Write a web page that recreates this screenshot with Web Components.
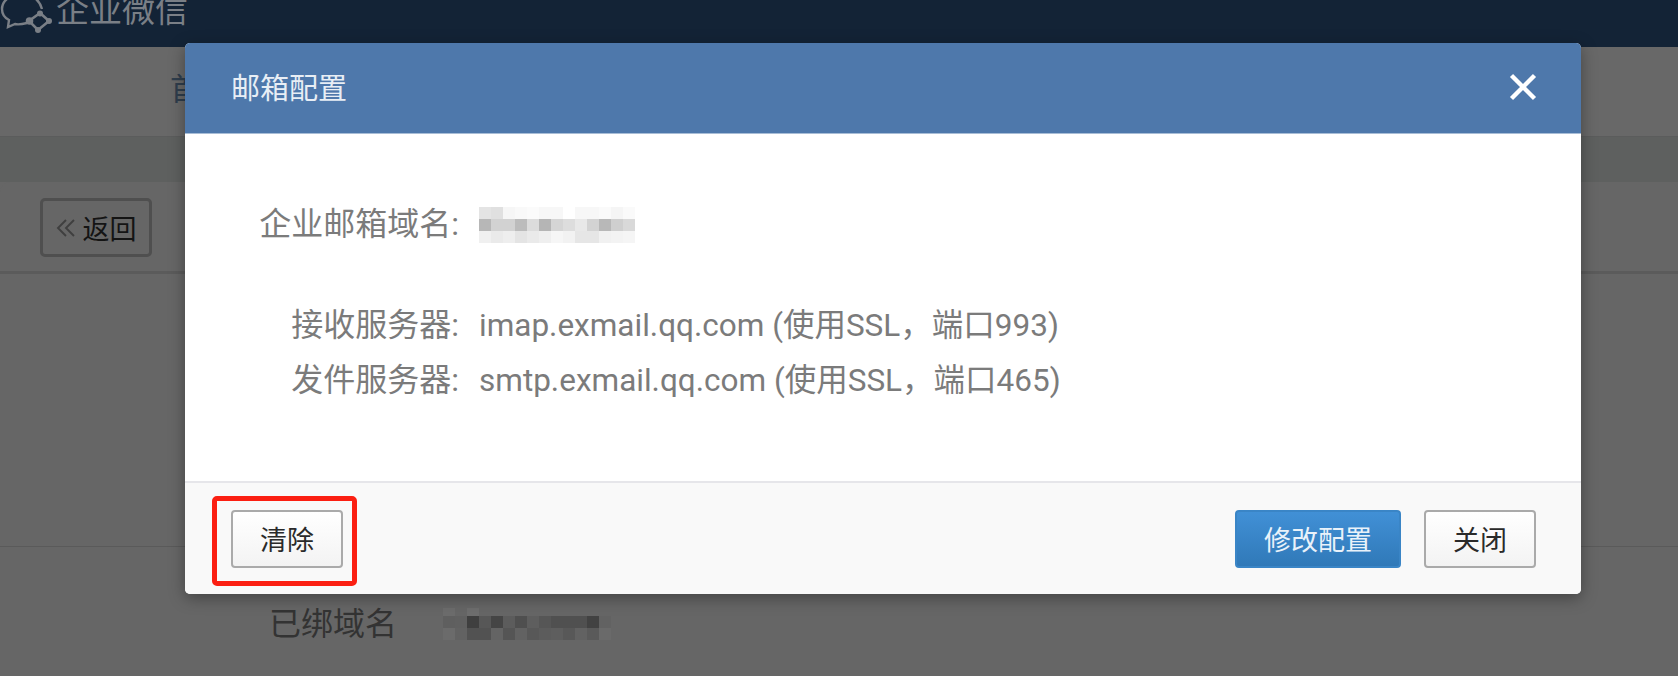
<!DOCTYPE html>
<html>
<head>
<meta charset="utf-8">
<style>
    html, body { margin: 0; height: 100%; overflow: hidden; background: #666; }
    body { font-family: Roboto, "Noto Sans CJK SC", sans-serif; }
</style>
</head>
<body>
<wx-admin-page>
    <wx-dialog heading="邮箱配置">
        <wx-config-row label="企业邮箱域名:" class="domain">
            <wx-mosaic cell="12" rows="e4e4e4 e0e0e0 f6f6f6 f9f9f9 fbfbfb f7f7f7 f7f7f7 ffffff f7f7f7 f7f7f7 fafafa f5f5f5 fafafa,b7b7b7 d2d2d2 d2d2d2 bcbcbc dcdcdc b5b5b5 d5d5d5 dddddd e8e8e8 d3d3d3 b8b8b8 cfcfcf d9d9d9,f0f0f0 eaeaea eeeeee e4e4e4 eaeaea efefef f6f6f6 f2f2f2 e6e6e6 e6e6e6 f1f1f1 f3f3f3 f5f5f5"></wx-mosaic>
        </wx-config-row>
        <wx-config-row label="接收服务器:" class="imap">imap.exmail.qq.com (使用SSL，端口993)</wx-config-row>
        <wx-config-row label="发件服务器:" class="smtp">smtp.exmail.qq.com (使用SSL，端口465)</wx-config-row>
        <wx-button slot="footer-left" marked>清除</wx-button>
        <wx-button slot="footer-right" primary>修改配置</wx-button>
        <wx-button slot="footer-right">关闭</wx-button>
    </wx-dialog>
</wx-admin-page>

<script>
// header, nav and the dimmed page behind the dialog
class WxAdminPage extends HTMLElement {
    constructor() {
        super();
        this.attachShadow({ mode: 'open' });
        this.shadowRoot.innerHTML = `
        <style>
            :host { display: block; position: relative; height: 676px; overflow: hidden; background: #666; color: #3a3a3a; }
            #top { height: 47px; background: #132336; display: flex; align-items: flex-start; overflow: hidden; }
            #logo { flex: none; width: 52px; height: 34px; }
            #brand { font-size: 33px; line-height: 40px; color: #7a7f86; margin: -9px 0 0 4px; }
            #nav { height: 90px; background: #686868; border-bottom: 1px solid #5b5c5c; box-sizing: border-box; padding: 21px 0 0 170px; font-size: 31px; line-height: 44px; color: #2f3d4c; }
            #band { height: 45px; background: #5e605f; }
            #bar { height: 92px; background: #666; border-radius: 10px 10px 0 0; border-bottom: 3px solid #5b5b5b; box-sizing: border-box; padding: 16px 0 0 40px; }
            #back { width: 112px; height: 59px; box-sizing: border-box; border: 3px solid #4f4f4f; border-radius: 5px; display: flex; align-items: center; justify-content: center; gap: 7px; font-size: 27px; color: #141414; }
            #back svg { width: 20px; height: 20px; }
            #rest { height: 272px; }
            #line { height: 1px; background: #5a5a5a; }
            #bound { display: flex; align-items: center; gap: 46px; padding: 55px 0 0 269px; }
            #bound span { font-size: 32px; line-height: 44px; color: #333; }
        </style>
        <div id="top">
            <svg id="logo" viewBox="0 0 52 34" fill="none" stroke="#7a7f86" stroke-width="2.4">
                <path d="M42 9 C40 1 33 -6 22 -6 C10 -6 2 1 2 9 C2 14 5 18 9 20 L8 27 L15 24 C19 25 23 24 27 23"/>
                <path d="M40 13 L29 21 L38 30 L49 21 Z" stroke-width="2.6"/>
                <circle cx="29.500" cy="21" r="3.800" fill="#7a7f86" stroke="none"/>
                <circle cx="40" cy="13.500" r="3" fill="#7a7f86" stroke="none"/>
                <circle cx="49" cy="21" r="3" fill="#7a7f86" stroke="none"/>
                <circle cx="38" cy="30" r="3" fill="#7a7f86" stroke="none"/>
            </svg>
            <span id="brand">企业微信</span>
        </div>
        <div id="nav">首页</div>
        <div id="band"></div>
        <div id="bar">
            <div id="back">
                <svg viewBox="0 0 20 20" fill="none" stroke="#3f3f3f" stroke-width="1.900"><path d="M10 2 L2 10 L10 18 M18 2 L10 10 L18 18"/></svg>
                <span>返回</span>
            </div>
        </div>
        <div id="rest"></div>
        <div id="line"></div>
        <div id="bound">
            <span>已绑域名</span>
            <wx-mosaic cell="12" first-row="8" rows="6c6c6c 666666 6e6e6e 666666 666666 666666 666666 666666 666666 666666 666666 666666 666666 666666,5f5f5f 606060 3f3f3f 575757 454545 5c5c5c 4f4f4f 5e5e5e 565656 505050 505050 505050 424242 626262,6b6b6b 626262 525252 525252 646464 555555 626262 585858 5c5c5c 5e5e5e 585858 626262 5a5a5a 6a6a6a"></wx-mosaic>
        </div>
        <slot></slot>`;
    }
}

// modal box, the only thing not dimmed
class WxDialog extends HTMLElement {
    constructor() {
        super();
        this.attachShadow({ mode: 'open' });
        this.shadowRoot.innerHTML = `
        <style>
            :host { display: flex; flex-direction: column; position: absolute; left: 185px; top: 43px; width: 1396px; height: 551px; border-radius: 5px; overflow: hidden; background: #fff; box-shadow: 0 4px 16px rgba(0,0,0,.35); }
            #head { flex: none; height: 91px; box-sizing: border-box; background: #4e78ab; border-bottom: 1px solid #a8bdd6; display: flex; align-items: center; justify-content: space-between; padding: 0 44px 0 46px; color: #e8eef5; font-size: 29px; }
            #title { margin-top: -4px; }
            #close { width: 28px; height: 28px; display: block; margin-top: -3px; }
            #body { flex: 1; padding: 63px 0 0; }
            #foot { flex: none; height: 113px; box-sizing: border-box; background: #f9f9f9; border-top: 2px solid #e6e6ea; display: flex; align-items: center; justify-content: space-between; padding: 0 45px 0 46px; }
            #right { display: flex; gap: 23px; }
        </style>
        <div id="head">
            <span id="title"></span>
            <svg id="close" viewBox="0 0 28 28" stroke="#fff" stroke-width="4.400" fill="none"><path d="M2.500 2.500 L25.500 25.500 M25.500 2.500 L2.500 25.500"/></svg>
        </div>
        <div id="body"><slot></slot></div>
        <div id="foot">
            <div><slot name="footer-left"></slot></div>
            <div id="right"><slot name="footer-right"></slot></div>
        </div>`;
    }
    connectedCallback() {
        this.shadowRoot.getElementById('title').textContent = this.getAttribute('heading');
    }
}

// label column + value
class WxConfigRow extends HTMLElement {
    constructor() {
        super();
        this.attachShadow({ mode: 'open' });
        this.shadowRoot.innerHTML = `
        <style>
            :host { display: grid; grid-template-columns: 274px 1fr; column-gap: 20px; font-size: 31.500px; line-height: 55px; height: 55px; color: #7b7b7b; align-items: center; }
            :host(.domain) { margin-bottom: 46px; }
            #label { text-align: right; font-size: 32px; }
            #value { display: flex; align-items: center; }
        </style>
        <span id="label"></span>
        <div id="value"><slot></slot></div>`;
    }
    connectedCallback() {
        this.shadowRoot.getElementById('label').textContent = this.getAttribute('label');
    }
}

class WxButton extends HTMLElement {
    constructor() {
        super();
        this.attachShadow({ mode: 'open' });
        this.shadowRoot.innerHTML = `
        <style>
            :host { display: block; position: relative; }
            button { display: block; height: 58px; width: 112px; box-sizing: border-box; border: 2px solid #aaa; border-radius: 4px; background: linear-gradient(#fff, #f3f3f3); color: #2a2a2a; font: inherit; font-size: 27px; padding: 0; }
            :host([primary]) button { width: 166px; background: linear-gradient(#4190d6, #3079b8); border-color: #3a85c6; color: #e9f2fa; }
            #mark { display: none; position: absolute; left: -19px; top: -14px; width: 145px; height: 90px; box-sizing: border-box; border: 5px solid #fb1f12; border-radius: 5px; }
            :host([marked]) #mark { display: block; }
        </style>
        <button><slot></slot></button>
        <div id="mark"></div>`;
    }
}

// pixelated patch standing in for the blurred out text
class WxMosaic extends HTMLElement {
    constructor() {
        super();
        this.attachShadow({ mode: 'open' });
    }
    connectedCallback() {
        const cell = this.getAttribute('cell') || 12;
        const first = this.getAttribute('first-row') || cell;
        const rows = this.getAttribute('rows').split(',').map(r => r.split(' '));
        const cells = rows.flat().map(c => `<i style="background:#${c}"></i>`).join('');
        this.shadowRoot.innerHTML = `
        <style>
            :host { display: inline-grid; grid-template-columns: repeat(${rows[0].length}, ${cell}px); grid-template-rows: ${first}px repeat(${rows.length - 1}, ${cell}px); }
        </style>${cells}`;
    }
}

customElements.define('wx-admin-page', WxAdminPage);
customElements.define('wx-dialog', WxDialog);
customElements.define('wx-config-row', WxConfigRow);
customElements.define('wx-button', WxButton);
customElements.define('wx-mosaic', WxMosaic);
</script>
</body>
</html>
